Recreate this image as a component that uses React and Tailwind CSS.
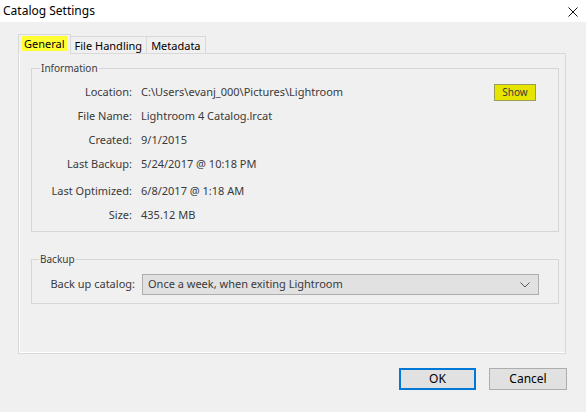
import { useState } from 'react';

const rows = [
  { label: 'Location:', value: 'C:\\Users\\evanj_000\\Pictures\\Lightroom', show: true, gap: 'mt-[5px]' },
  { label: 'File Name:', value: 'Lightroom 4 Catalog.lrcat', gap: '' },
  { label: 'Created:', value: '9/1/2015', gap: '' },
  { label: 'Last Backup:', value: '5/24/2017 @ 10:18 PM', gap: '' },
  { label: 'Last Optimized:', value: '6/8/2017 @ 1:18 AM', gap: 'mt-[3px]' },
  { label: 'Size:', value: '435.12 MB', gap: '' },
];

function App() {
  const [tab, setTab] = useState('General');
  const tabs = ['General', 'File Handling', 'Metadata'];

  return (
    <div className="w-[586px] h-[412px] bg-[#f0f0f0] flex flex-col text-[#3a3a3a] overflow-hidden" style={{ fontFamily: '"Noto Sans", "Open Sans", sans-serif' }}>
      {/* title bar */}
      <div className="h-[22px] bg-white flex items-center justify-between pl-[3px] pr-[8px] shrink-0">
        <span className="text-[12px] text-black leading-none">Catalog Settings</span>
        <svg width="10" height="10" viewBox="0 0 10 10" className="mt-[1px]">
          <path d="M0.5 0.5 L9.5 9.5 M9.5 0.5 L0.5 9.5" stroke="#111" strokeWidth="1" fill="none" />
        </svg>
      </div>

      {/* tabs */}
      <div className="flex items-end pl-[18px] mt-[11px] h-[20px] text-[11px] text-black">
        {tabs.map((t) => {
          const active = t === tab;
          return (
            <div
              key={t}
              onClick={() => setTab(t)}
              className={`border border-[#d9d9d9] border-b-0 bg-[#f0f0f0] flex items-center leading-none cursor-default ${active ? 'h-[20px] px-[3px] relative z-10 -mb-[1px] pb-[2px]' : 'h-[17px] px-[4px] -ml-px'}`}
            >
              <span className={active ? 'bg-[#ffff33] px-[2px] py-[2px]' : ''}>{t}</span>
            </div>
          );
        })}
      </div>

      {/* panel */}
      <div className="ml-[18px] w-[548px] h-[301px] border border-[#d9d9d9] shadow-[inset_1px_-1px_0_#fff] pl-[12px] pr-[6px] pt-[8px] shrink-0">
        <fieldset className="border border-[#d6d6d6] px-[1px] pb-[4px]">
          <legend className="ml-[7px] px-[1px] text-[10px] leading-[13px]">Information</legend>
          <div className="flex flex-col text-[11px]">
            {rows.map((r) => (
              <div key={r.label} className={`h-[24px] flex items-center ${r.gap}`}>
                <span className="w-[99px] text-right">{r.label}</span>
                <span className="ml-[9px] flex-1">{r.value}</span>
                {r.show && (
                  <div className="w-[42px] h-[17px] mr-[21px] bg-[#e5e500] border border-[#9c9c5a] text-[10px] flex items-center justify-center">
                    Show
                  </div>
                )}
              </div>
            ))}
          </div>
        </fieldset>

        <fieldset className="border border-[#d6d6d6] mt-[21px] px-[1px] pb-[8px]">
          <legend className="ml-[6px] px-[1px] text-[10px] leading-[13px]">Backup</legend>
          <div className="flex items-center mt-[8px] text-[11px]">
            <span className="w-[102px] text-right">Back up catalog:</span>
            <div className="ml-[7px] w-[397px] h-[21px] bg-[#e1e1e1] border border-[#adadad] flex items-center justify-between pl-[5px] pr-[8px]">
              <span>Once a week, when exiting Lightroom</span>
              <svg width="10" height="6" viewBox="0 0 10 6">
                <path d="M0.5 0.5 L5 5 L9.5 0.5" stroke="#555" strokeWidth="1" fill="none" />
              </svg>
            </div>
          </div>
        </fieldset>
      </div>

      {/* buttons */}
      <div className="flex justify-end gap-[13px] pr-[19px] mt-[14px] text-[12px] text-black">
        <div className="w-[77px] h-[22px] bg-[#e1e1e1] border-2 border-[#0078d7] flex items-center justify-center">OK</div>
        <div className="w-[78px] h-[22px] bg-[#e1e1e1] border border-[#adadad] flex items-center justify-center">Cancel</div>
      </div>
    </div>
  );
}

export default App;
